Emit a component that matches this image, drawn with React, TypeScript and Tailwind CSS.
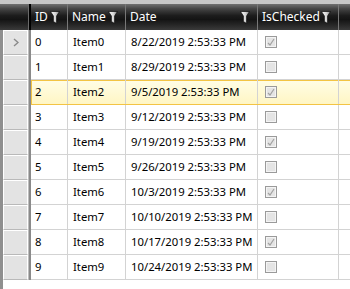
import React from 'react';

type Row = { id: number; name: string; date: string; checked: boolean };

const dates = ['8/22', '8/29', '9/5', '9/12', '9/19', '9/26', '10/3', '10/10', '10/17', '10/24'];

const rows: Row[] = dates.map((d, i) => ({
  id: i,
  name: `Item${i}`,
  date: `${d}/2019 2:53:33 PM`,
  checked: i % 2 === 0,
}));

const headerBg =
  'bg-[linear-gradient(to_bottom,#707070_0%,#454545_18%,#1c1c1c_45%,#141414_60%,#262626_80%,#3a3a3a_100%)]';

const Funnel = () => (
  <svg width="10" height="13" viewBox="0 0 10 13" className="h-[13px] w-[10px] shrink-0">
    <defs>
      <linearGradient id="fg" x1="0" y1="0" x2="1" y2="0">
        <stop offset="0" stopColor="#ffffff" />
        <stop offset="0.55" stopColor="#d4d4d4" />
        <stop offset="1" stopColor="#808080" />
      </linearGradient>
    </defs>
    <polygon points="0.5,0.5 9.5,0.5 6.6,5 6.6,12.5 3.4,10.5 3.4,5" fill="url(#fg)" stroke="#0a0a0a" strokeWidth="0.7" />
  </svg>
);

const CheckBox = ({ checked }: { checked: boolean }) => (
  <div className="flex h-[12px] w-[12px] items-center justify-center border border-[#9a9a9a] bg-[#e4e4e4] shadow-[inset_0_0_0_1px_#f4f4f4]">
    {checked && (
      <svg width="8" height="8" viewBox="0 0 8 8">
        <path d="M1 5 L3 7 L7 1" fill="none" stroke="#a2a2a2" strokeWidth="1.2" />
      </svg>
    )}
  </div>
);

const cols = [
  { key: 'id', label: 'ID', w: 'w-[37px]' },
  { key: 'name', label: 'Name', w: 'w-[58px]' },
  { key: 'date', label: 'Date', w: 'w-[132px]' },
  { key: 'checked', label: 'IsChecked', w: 'w-[81px]' },
];

export default function App() {
  return (
    <div
      className="relative h-[289px] w-[350px] overflow-hidden bg-white text-[11.3px] text-black"
      style={{ fontFamily: '"Noto Sans", "Open Sans", sans-serif' }}
    >
      <div className="h-[4px] bg-[#c6c6c6]" />

      {/* header */}
      <div className={`flex h-[26px] ${headerBg}`}>
        <div className="w-[29px] border-r border-[#6a6a6a]" />
        <div className="w-[2px] bg-black" />
        {cols.map(c => (
          <div
            key={c.key}
            className={`flex ${c.w} items-center justify-between border-r border-[#777] pl-[4px] pr-[7px] text-[12px] text-white`}
          >
            <span className="leading-none">{c.label}</span>
            <Funnel />
          </div>
        ))}
        <div className="flex-1" />
      </div>

      {/* body */}
      <div className="flex">
        <div className="flex w-[31px] shrink-0 flex-col">
          {rows.map(r => (
            <div key={r.id} className="flex h-[25px]">
              <div className="w-[3px] bg-[#8f8f8f]" />
              <div className="flex w-[25px] items-center justify-center border border-b-[#b9b9b9] border-l-white border-r-white border-t-white bg-[#e3e3e3]">
                {r.id === 0 && (
                  <svg width="6" height="9" viewBox="0 0 6 9">
                    <path d="M1 1 L5 4.5 L1 8" fill="none" stroke="#8a8a8a" strokeWidth="1.4" />
                  </svg>
                )}
              </div>
              <div className="w-[1px] bg-[#bdbdbd]" />
              <div className="w-[2px] bg-[#8a8a8a]" />
            </div>
          ))}
        </div>

        <div className="flex flex-1 flex-col">
          {rows.map(r => {
            const hl = r.id === 2;
            return (
              <div
                key={r.id}
                className={`flex h-[25px] border-b ${
                  hl
                    ? 'border-[#f3c444] bg-[linear-gradient(to_bottom,#fffde6,#fff6c4)] shadow-[inset_1px_1px_0_#f3c444]'
                    : 'border-[#d3d3d3]'
                }`}
              >
                <div className="flex w-[37px] items-center border-r border-[#d3d3d3] pl-[4px]">{r.id}</div>
                <div className="flex w-[58px] items-center border-r border-[#d3d3d3] pl-[5px]">{r.name}</div>
                <div className="flex w-[132px] items-center whitespace-nowrap border-r border-[#d3d3d3] pl-[5px]">
                  {r.date}
                </div>
                <div className="flex w-[81px] items-center border-r border-[#d3d3d3] pl-[7px]">
                  <CheckBox checked={r.checked} />
                </div>
                <div className="flex-1" />
              </div>
            );
          })}
        </div>
      </div>

      <div className="flex h-[20px]">
        <div className="w-[3px] bg-[#8f8f8f]" />
      </div>
    </div>
  );
}
